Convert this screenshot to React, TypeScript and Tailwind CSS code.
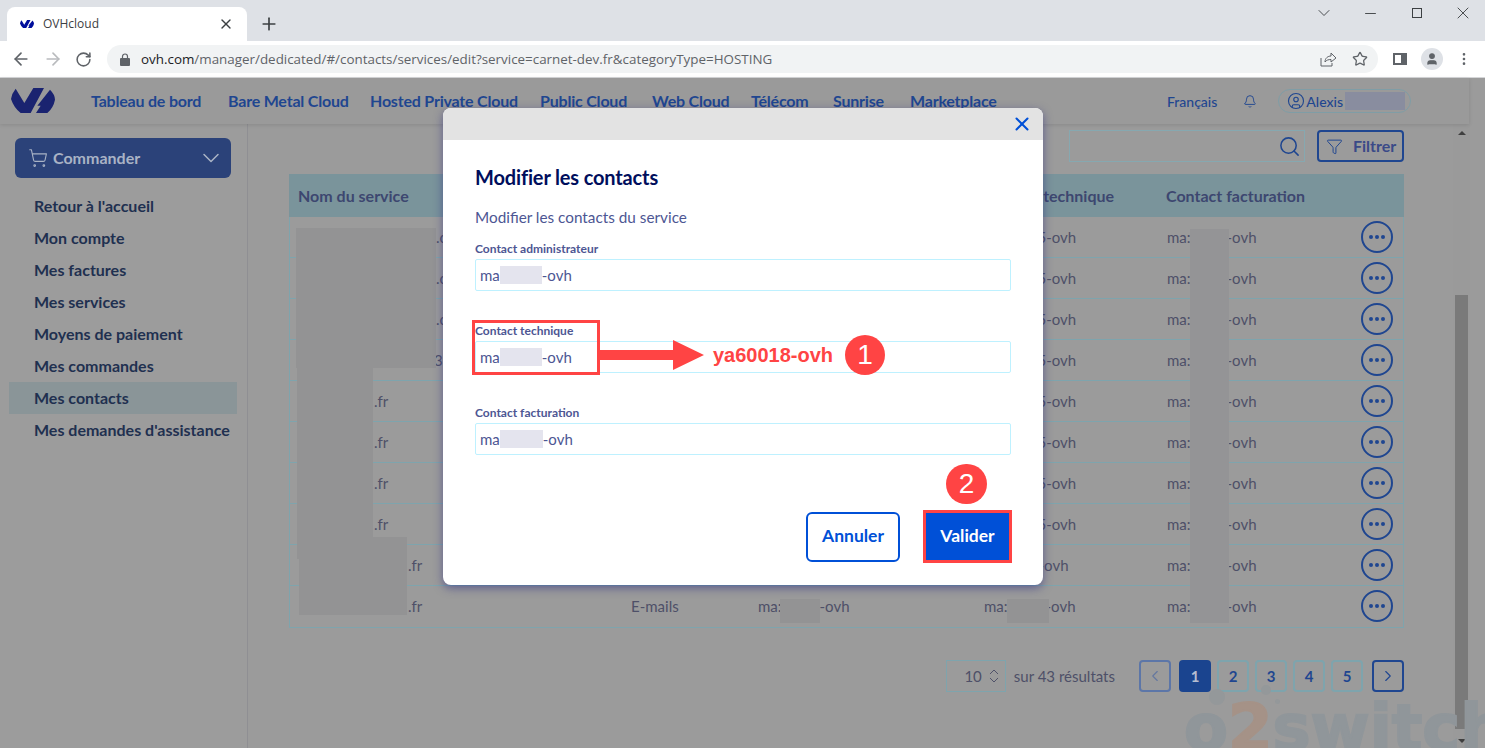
import { ArrowLeft, ArrowRight, RotateCw, Star, X, Plus, ChevronDown, Minus, MoreVertical, User, Bell, CircleUser, Search, Funnel, ShoppingCart, ChevronLeft, ChevronRight, ChevronsUpDown } from "lucide-react"

const navItems = [
  { label: "Tableau de bord", cls: "w-[137px]" },
  { label: "Bare Metal Cloud", cls: "w-[142px]" },
  { label: "Hosted Private Cloud", cls: "w-[170px]" },
  { label: "Public Cloud", cls: "w-[112px]" },
  { label: "Web Cloud", cls: "w-[99px]" },
  { label: "Télécom", cls: "w-[82px]" },
  { label: "Sunrise", cls: "w-[77px]" },
  { label: "Marketplace", cls: "w-[100px]" },
]

const menuItems = ["Retour à l'accueil", "Mon compte", "Mes factures", "Mes services", "Moyens de paiement", "Mes commandes", "Mes contacts", "Mes demandes d'assistance"]

const rows = [
  { name: "pl-[137px]", suffix: ".com", tech: "5-ovh", mask: "w-[30px]" },
  { name: "pl-[137px]", suffix: ".com", tech: "5-ovh", mask: "w-[30px]" },
  { name: "pl-[137px]", suffix: ".com", tech: "5-ovh", mask: "w-[30px]" },
  { name: "pl-[135px]", suffix: "32.com", tech: "5-ovh", mask: "w-[30px]" },
  { name: "pl-[75px]", suffix: ".fr", tech: "5-ovh", mask: "w-[30px]" },
  { name: "pl-[75px]", suffix: ".fr", tech: "5-ovh", mask: "w-[30px]" },
  { name: "pl-[75px]", suffix: ".fr", tech: "5-ovh", mask: "w-[30px]" },
  { name: "pl-[75px]", suffix: ".fr", tech: "5-ovh", mask: "w-[30px]" },
  { name: "pl-[109px]", suffix: ".fr", tech: "-ovh", mask: "w-[31px]" },
  { name: "pl-[109px]", suffix: ".fr", tech: "-ovh", mask: "w-[38px]" },
]

function OvhLogo({ className, color }: { className: string; color: string }) {
  return (
    <svg viewBox="33 265 132 75" className={className} fill={color}>
      <path d="M47 267 L73 310 L100 265 L132 265 L92 340 L62 340 Q42 325 33 298 Q36 280 47 267 Z" />
      <path d="M150 270 Q165 285 165 300 Q160 325 142 340 L108 340 L122 318 L112 318 Z" />
    </svg>
  )
}

function Field({ label, mask, labelCls }: { label: string; mask: string; labelCls: string }) {
  return (
    <div className={labelCls}>
      <div className="h-[18px] text-[12px] leading-[18px] font-bold text-[#4d5693]">{label}</div>
      <div className="h-[32px] mt-[1px] rounded-[2px] border-[1.5px] border-[#bef1ff] pl-[4px] flex items-center text-[15px] text-[#4d5693]">
        ma<span className={`inline-block h-[18px] bg-[#e4e4ee] ${mask}`}></span>-ovh
      </div>
    </div>
  )
}

export default function App() {
  return (
    <div className="relative w-[1485px] h-[748px] overflow-hidden flex flex-col bg-[#9b9b9b] font-['Lato','Noto_Sans',sans-serif]">
      {/* tab strip */}
      <div className="h-[41px] bg-[#dee1e6] flex items-end shrink-0 font-['Open_Sans',sans-serif]">
        <div className="ml-[7px] w-[240px] h-[34px] bg-white rounded-t-[8px] flex items-center pl-[13px] pr-[13px]">
          <OvhLogo className="w-[14px] h-[8px]" color="#000e9c" />
          <span className="ml-[9px] text-[12px] text-[#3c4043]">OVHcloud</span>
          <X className="ml-auto w-[16px] h-[16px] text-[#3c4043]" strokeWidth={2} />
        </div>
        <Plus className="ml-[12px] mb-[7px] w-[20px] h-[20px] text-[#3c4043]" strokeWidth={2} />
        <div className="ml-auto self-start flex items-center h-[26px] text-[#3c4043]">
          <ChevronDown className="w-[20px] h-[20px]" strokeWidth={1.1} />
          <Minus className="ml-[28px] w-[17px] h-[17px]" strokeWidth={1.3} />
          <div className="ml-[33px] w-[10px] h-[10px] border border-[#3c4043]"></div>
          <X className="ml-[31px] w-[20px] h-[20px] mr-[12px]" strokeWidth={1.1} />
        </div>
      </div>

      {/* toolbar */}
      <div className="h-[37px] bg-white border-b border-[#d5d6d8] flex items-center shrink-0 font-['Open_Sans',sans-serif]">
        <ArrowLeft className="ml-[11px] w-[20px] h-[20px] text-[#5f6368]" strokeWidth={2} />
        <ArrowRight className="ml-[12px] w-[20px] h-[20px] text-[#b9bbbe]" strokeWidth={2} />
        <RotateCw className="ml-[12px] w-[17px] h-[17px] text-[#5f6368]" strokeWidth={2.2} />
        <div className="ml-[15px] w-[1271px] h-[28px] bg-[#f1f3f4] rounded-full flex items-center pl-[13px] pr-[10px]">
          <svg viewBox="0 0 10 13" className="w-[10px] h-[13px]" fill="#5f6368">
            <path d="M2.5 6 V3.5 a2.5 2.5 0 0 1 5 0 V6" fill="none" stroke="#5f6368" strokeWidth="1.2" />
            <rect x="0" y="5" width="10" height="8" rx="1" />
          </svg>
          <span className="ml-[11px] text-[13.4px] text-[#5f6368] whitespace-nowrap"><span className="text-[#202124]">ovh.com</span>/manager/dedicated/#/contacts/services/edit?service=carnet-dev.fr&categoryType=HOSTING</span>
          <svg viewBox="0 0 17 15" className="ml-auto w-[17px] h-[15px]" fill="none" stroke="#5f6368" strokeWidth="1">
            <path d="M1 6 V14 H12 V11" />
            <path d="M5 10 C5 6 8 4 11 4 V1 L16 6 L11 10 V7.5 C8.5 7.5 6.5 8 5 10 Z" />
          </svg>
          <Star className="ml-[15px] w-[16px] h-[16px] text-[#5f6368]" strokeWidth={1.9} />
        </div>
        <div className="ml-[15px] w-[14px] h-[12px] border-2 border-r-[6px] border-[#5f6368]"></div>
        <div className="ml-[14px] w-[22px] h-[22px] rounded-full bg-[#dee1e6] flex items-center justify-center">
          <User className="w-[14px] h-[14px] text-[#5f6368]" fill="#5f6368" />
        </div>
        <MoreVertical className="ml-[13px] w-[16px] h-[16px] text-[#5f6368]" strokeWidth={2} />
      </div>

      {/* ovh header */}
      <div className="h-[46px] w-[1469px] shrink-0 flex items-center bg-[#9a9a9a] shadow-[0_1px_4px_rgba(0,0,0,0.12)] z-10 relative">
        <OvhLogo className="ml-[11px] w-[44px] h-[25px] mb-[2px]" color="#1a2370" />
        <nav className="ml-[36px] flex">
          {navItems.map((item) => (
            <span key={item.label} className={`${item.cls} shrink-0 text-[16px] tracking-[-0.2px] font-bold text-[#1f4690]`}>{item.label}</span>
          ))}
        </nav>
        <span className="ml-[157px] text-[14px] font-medium text-[#1f4690]">Français</span>
        <Bell className="ml-[26px] w-[14px] h-[15px] text-[#1f4690]" strokeWidth={1.6} />
        <div className="ml-[21px] w-[133px] h-[24px] rounded-full border border-[#7f9da6] flex items-center pl-[8px]">
          <CircleUser className="w-[18px] h-[18px] text-[#1f4690]" strokeWidth={1.5} />
          <span className="ml-[1px] text-[14px] font-medium text-[#1f4690]">Alexis</span>
          <span className="ml-[2px] w-[60px] h-[18px] bg-[#898d9f]"></span>
        </div>
      </div>

      <div className="flex-1 flex min-h-0">
        {/* sidebar */}
        <aside className="w-[248px] shrink-0 border-r border-[#8f8f93] bg-[#9c9c9c]">
          <button className="ml-[15px] mt-[14px] w-[216px] h-[40px] rounded-[6px] bg-[#2b4279] flex items-center pl-[13px] pr-[6px] text-[16px] font-bold text-[#a9b3c5]">
            <ShoppingCart className="w-[20px] h-[20px]" strokeWidth={1.3} />
            <span className="ml-[5px]">Commander</span>
            <ChevronDown className="ml-auto w-[28px] h-[28px]" strokeWidth={1.3} />
          </button>
          <ul className="mt-[12px] ml-[9px] w-[228px]">
            {menuItems.map((item) => (
              <li key={item} className={`h-[32px] flex items-center pl-[25px] text-[16px] font-bold text-[#1f3050] whitespace-nowrap ${item === "Mes contacts" ? "bg-[#8a9598]" : ""}`}>{item}</li>
            ))}
          </ul>
        </aside>

        {/* main */}
        <main className="w-[1205px] shrink-0 pl-[41px] relative">
          <div className="mt-[6px] flex justify-end w-[1115px] gap-[12px]">
            <div className="w-[236px] h-[32px] border border-[#86a8b0] flex items-center justify-end pr-[3px]">
              <Search className="w-[23px] h-[23px] text-[#1f4690]" strokeWidth={1.6} />
            </div>
            <div className="w-[87px] h-[32px] rounded-[4px] border-2 border-[#1f4690] flex items-center pl-[7px] text-[16px] font-bold text-[#3a4a88]">
              <Funnel className="w-[17px] h-[17px] text-[#1f4690]" strokeWidth={1.4} />
              <span className="ml-[10px]">Filtrer</span>
            </div>
          </div>

          <div className="mt-[12px] w-[1115px] border-x border-b border-[#7ea4ad] text-[#4e5068] text-[15px]">
            <div className="h-[43px] -mx-px bg-[#7a949b] grid grid-cols-[332px_127px_226px_183px_1fr] items-center pl-[9px] font-bold text-[16px] text-[#3d4770]">
              <span>Nom du service</span>
              <span></span>
              <span></span>
              <span>Contact technique</span>
              <span>Contact facturation</span>
            </div>
            {rows.map((row, i) => (
              <div key={i} className="h-[41px] border-b border-[#7ea4ad] last:border-b-0 grid grid-cols-[332px_127px_226px_183px_1fr] items-center pl-[9px] relative whitespace-nowrap">
                <span className={row.name}>{row.suffix}</span>
                <span>E-mails</span>
                <span>ma:<span className="inline-block w-[38px]"></span>-ovh</span>
                <span>ma:<span className={`inline-block ${row.mask}`}></span>{row.tech}</span>
                <span>ma:<span className="inline-block w-[36px]"></span>-ovh</span>
                <button className="absolute right-[10px] top-[4px] w-[32px] h-[32px] rounded-full border-2 border-[#1f4690] flex items-center justify-center gap-[2px]">
                  <span className="w-[4px] h-[4px] rounded-full bg-[#1f4690]"></span>
                  <span className="w-[4px] h-[4px] rounded-full bg-[#1f4690]"></span>
                  <span className="w-[4px] h-[4px] rounded-full bg-[#1f4690]"></span>
                </button>
              </div>
            ))}
          </div>

          {/* pagination */}
          <div className="mt-[32px] w-[1115px] flex items-center justify-end text-[#4e5068]">
            <div className="w-[60px] h-[32px] border border-[#7ea4ad] flex items-center justify-end pr-[2px] text-[15px]">
              10<ChevronsUpDown className="ml-[3px] w-[18px] h-[18px]" strokeWidth={1.3} />
            </div>
            <span className="ml-[8px] mr-[24px] text-[15px]">sur 43 résultats</span>
            <div className="w-[32px] h-[32px] rounded-[4px] border-2 border-[#5c76a8] flex items-center justify-center"><ChevronLeft className="w-[18px] h-[18px] text-[#64779f]" strokeWidth={1.5} /></div>
            <div className="ml-[8px] w-[32px] h-[32px] rounded-[4px] bg-[#1a448f] text-[#b5bdd0] font-bold text-[15px] flex items-center justify-center">1</div>
            {["2", "3", "4", "5"].map((n) => (
              <div key={n} className="ml-[6px] w-[32px] h-[32px] rounded-[4px] border-2 border-[#7ea4ad] text-[#1f4690] font-bold text-[15px] flex items-center justify-center">{n}</div>
            ))}
            <div className="ml-[9px] w-[32px] h-[32px] rounded-[4px] border-2 border-[#1f4690] flex items-center justify-center"><ChevronRight className="w-[18px] h-[18px] text-[#1f4690]" strokeWidth={1.5} /></div>
          </div>
        </main>

        {/* scrollbar */}
        <div className="w-[17px] shrink-0 bg-[#9a9a9a] flex flex-col items-center relative">
          <span className="mt-[7px] w-0 h-0 border-x-[4px] border-x-transparent border-b-[4px] border-b-[#3f3f3f]"></span>
          <div className="mt-[160px] w-[13px] h-[434px] bg-[#7a7a7a]"></div>
          <span className="mt-[10px] w-0 h-0 border-x-[4px] border-x-transparent border-t-[4px] border-t-[#3f3f3f]"></span>
        </div>
      </div>

      {/* blurred-out patches */}
      <div className="absolute left-[296px] top-[228px] w-[140px] h-[140px] bg-[#939394]"></div>
      <div className="absolute left-[297px] top-[353px] w-[76px] h-[206px] bg-[#939394]"></div>
      <div className="absolute left-[299px] top-[537px] w-[108px] h-[78px] bg-[#939394]"></div>
      <div className="absolute left-[1190px] top-[229px] w-[39px] h-[394px] bg-[#949496]"></div>
      <div className="absolute left-[780px] top-[599px] w-[40px] h-[24px] bg-[#939394]"></div>
      <div className="absolute left-[1007px] top-[599px] w-[42px] h-[24px] bg-[#939394]"></div>

      {/* watermark */}
      <div className="absolute left-[1209px] top-[689px] w-[16px] h-[16px] rounded-full bg-[#94989a]"></div>
      <div className="absolute left-[1261px] top-[685px] w-[10px] h-[10px] rounded-full bg-[#94989a]"></div>
      <div className="absolute left-[1275px] top-[699px] w-[5px] h-[5px] rounded-full bg-[#94989a]"></div>
      <div className="absolute left-[1184px] top-[692px] text-[64px] leading-[72px] font-bold font-['DejaVu_Sans',sans-serif] text-[#90969a] [-webkit-text-stroke-width:2px] whitespace-nowrap">
        o<span className="text-[#a59287]">2</span>switch
      </div>

      {/* modal */}
      <div className="absolute left-[443px] top-[108px] w-[600px] h-[477px] bg-white rounded-[8px] overflow-hidden shadow-[0_3px_10px_rgba(40,40,130,0.55)] z-20">
        <div className="h-[32px] bg-[#e3e3e3] flex items-center justify-end pr-[10px]">
          <X className="w-[22px] h-[22px] text-[#0050d7]" strokeWidth={2.2} />
        </div>
        <div className="px-[32px]">
          <h2 className="mt-[24px] text-[20px] leading-[26px] tracking-[-0.15px] font-bold text-[#000e5c]">Modifier les contacts</h2>
          <p className="mt-[17px] text-[15.3px] leading-[20px] text-[#4d5693]">Modifier les contacts du service</p>
          <Field label="Contact administrateur" mask="w-[42px]" labelCls="mt-[13px]" />
          <Field label="Contact technique" mask="w-[42px]" labelCls="mt-[31px]" />
          <Field label="Contact facturation" mask="w-[43px]" labelCls="mt-[31px]" />
          <div className="mt-[55px] -mr-[1px] flex justify-end items-center">
            <button className="w-[94px] h-[50px] rounded-[6px] border-2 border-[#0050d7] text-[17.5px] font-bold text-[#0050d7]">Annuler</button>
            <button className="ml-[23px] w-[89px] h-[53px] border-[3px] border-[#ff4444] bg-[#0050d7] text-[17.5px] font-bold text-white">Valider</button>
          </div>
        </div>
      </div>

      {/* annotations */}
      <div className="absolute left-[472px] top-[320px] w-[128px] h-[55px] border-[3px] border-[#ff4444] z-30"></div>
      <svg className="absolute left-[600px] top-[340px] w-[105px] h-[30px] z-30" viewBox="0 0 105 30" fill="#ff4444">
        <path d="M0 10 H73 V0 L104 15 L73 30 V20 H0 Z" />
      </svg>
      <span className="absolute left-[713px] top-[342px] text-[20px] leading-[26px] font-bold font-['Liberation_Sans',sans-serif] text-[#ff4444] z-30">ya60018-ovh</span>
      <div className="absolute left-[845px] top-[335px] w-[40px] h-[40px] rounded-full bg-[#ff4444] text-white text-[28px] font-['Liberation_Sans',sans-serif] flex items-center justify-center z-30">1</div>
      <div className="absolute left-[946px] top-[464px] w-[41px] h-[40px] rounded-full bg-[#ff4444] text-white text-[28px] font-['Liberation_Sans',sans-serif] flex items-center justify-center z-30">2</div>
    </div>
  )
}
